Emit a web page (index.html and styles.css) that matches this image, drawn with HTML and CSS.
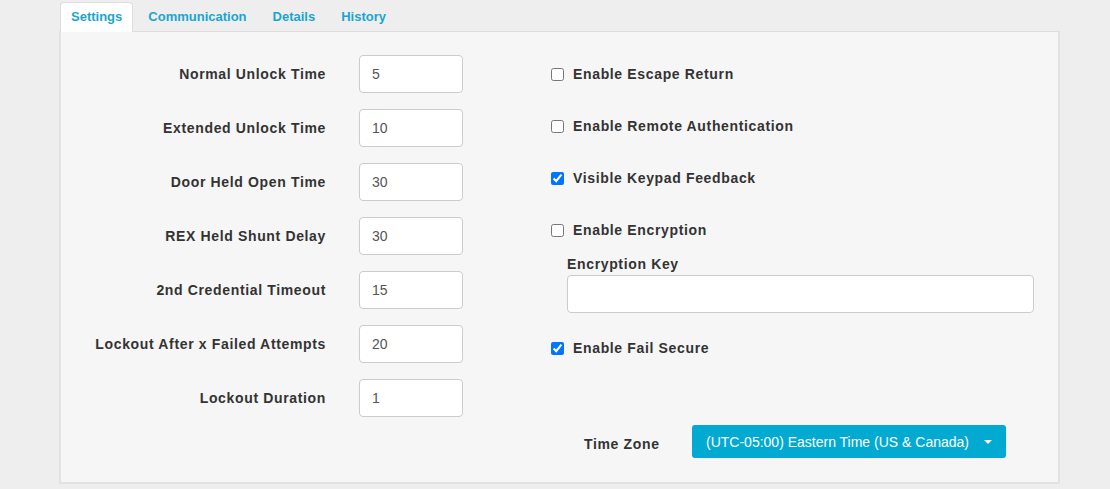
FILE: index.html
```html
<!DOCTYPE html>
<html>
<head>
<meta charset="utf-8">
<link rel="stylesheet" href="styles.css">
</head>
<body>
<div class="page">
  <ul class="tabs">
    <li class="tab active">Settings</li>
    <li class="tab">Communication</li>
    <li class="tab">Details</li>
    <li class="tab">History</li>
  </ul>
  <div class="panel">
    <div class="left">
      <label class="lbl">Normal Unlock Time</label><input class="num" type="text" value="5">
      <label class="lbl">Extended Unlock Time</label><input class="num" type="text" value="10">
      <label class="lbl">Door Held Open Time</label><input class="num" type="text" value="30">
      <label class="lbl">REX Held Shunt Delay</label><input class="num" type="text" value="30">
      <label class="lbl">2nd Credential Timeout</label><input class="num" type="text" value="15">
      <label class="lbl">Lockout After x Failed Attempts</label><input class="num" type="text" value="20">
      <label class="lbl">Lockout Duration</label><input class="num" type="text" value="1">
    </div>
    <div class="right">
      <label class="check first"><input type="checkbox"><span>Enable Escape Return</span></label>
      <label class="check"><input type="checkbox"><span>Enable Remote Authentication</span></label>
      <label class="check"><input type="checkbox" checked><span>Visible Keypad Feedback</span></label>
      <label class="check"><input type="checkbox"><span>Enable Encryption</span></label>
      <div class="keyblock">
        <div class="keylabel">Encryption Key</div>
        <input class="keyinput" type="text">
      </div>
      <label class="check secure"><input type="checkbox" checked><span>Enable Fail Secure</span></label>
      <div class="tzrow">
        <span class="tzlabel">Time Zone</span>
        <button class="tzbtn">(UTC-05:00) Eastern Time (US &amp; Canada)<span class="caret"></span></button>
      </div>
    </div>
  </div>
</div>
</body>
</html>
```

FILE: styles.css
```css
html, body {
  margin: 0;
  padding: 0;
  background: #eeeeee;
  font-family: "Liberation Sans", Arial, sans-serif;
}
.page {
  padding: 2px 0 0 59px;
  width: 1001px;
}
.tabs {
  list-style: none;
  margin: 0 0 0 1px;
  padding: 0;
  display: flex;
  gap: 4px;
  position: relative;
  z-index: 1;
}
.tab {
  height: 28px;
  line-height: 28px;
  padding: 0 10px;
  font-size: 13px;
  font-weight: bold;
  color: #1aa5d0;
  border: 1px solid transparent;
  border-bottom: none;
  border-radius: 4px 4px 0 0;
}
.tab.active {
  background: #ffffff;
  border-color: #dddddd;
  margin-bottom: -1px;
  height: 29px;
}
.panel {
  background: #f6f6f6;
  border: 2px solid #e2e2e2;
  border-top: 1px solid #dddddd;
  display: flex;
  padding: 23px 0 24px 0;
}
.left {
  display: grid;
  grid-template-columns: 264px 104px;
  column-gap: 34px;
  row-gap: 16px;
  align-items: center;
  align-content: start;
}
.lbl, .check, .keylabel, .tzlabel {
  font-size: 14px;
  font-weight: bold;
  color: #333333;
  letter-spacing: 0.65px;
}
.lbl {
  text-align: right;
  margin-right: -1px;
}
.num {
  box-sizing: border-box;
  width: 104px;
  height: 38px;
  border: 1px solid #cccccc;
  border-radius: 4px;
  background: #fff;
  padding: 0 12px;
  font-family: "Liberation Sans", Arial, sans-serif;
  font-size: 14px;
  color: #555555;
  outline: none;
}
.right {
  margin-left: 88px;
  display: flex;
  flex-direction: column;
  padding-top: 9px;
}
.check {
  display: flex;
  align-items: center;
  height: 20px;
  margin-top: 32px;
}
.check.first {
  margin-top: 0;
}
.check input {
  width: 13px;
  height: 13px;
  margin: 0 9px 0 0;
}
.keyblock {
  margin: 16px 0 0 16px;
}
.keylabel {
  height: 16px;
  line-height: 16px;
  margin-bottom: 3px;
}
.keyinput {
  box-sizing: border-box;
  width: 467px;
  height: 38px;
  border: 1px solid #cccccc;
  border-radius: 4px;
  background: #fff;
  outline: none;
  display: block;
}
.check.secure {
  margin-top: 25px;
}
.tzrow {
  display: flex;
  align-items: center;
  margin: 67px 0 0 33px;
}
.tzlabel {
  width: 75px;
  margin-right: 33px;
  padding-top: 4px;
  white-space: nowrap;
}
.tzbtn {
  height: 33px;
  width: 314px;
  background: #02aad1;
  border: none;
  border-radius: 3px;
  color: #ffffff;
  font-family: "Liberation Sans", Arial, sans-serif;
  font-size: 14px;
  padding: 0 0 0 14px;
  display: flex;
  align-items: center;
  text-align: left;
}
.caret {
  width: 0;
  height: 0;
  border-left: 4px solid transparent;
  border-right: 4px solid transparent;
  border-top: 4px solid #ffffff;
  margin-left: 15px;
}
```
